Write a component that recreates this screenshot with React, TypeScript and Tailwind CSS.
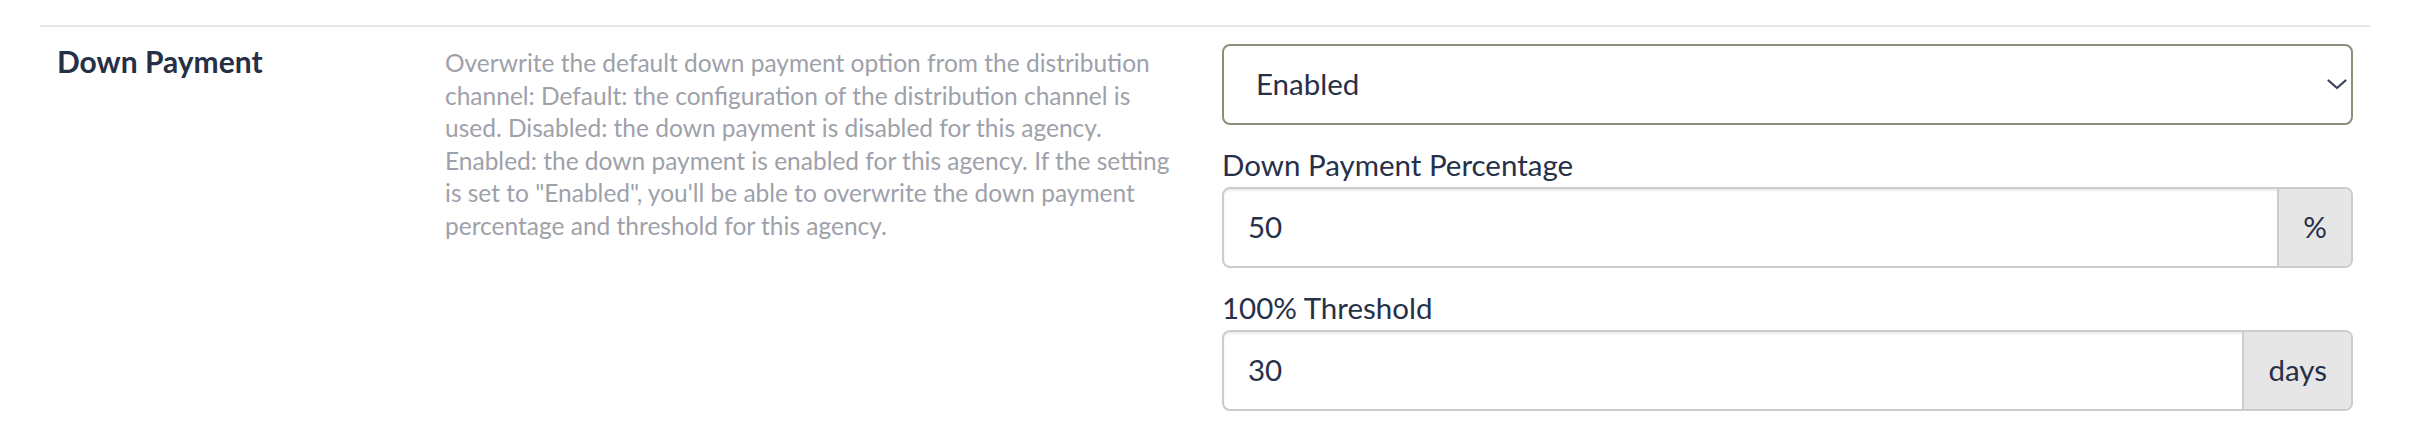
import React from 'react';

const ChevronDown: React.FC = () => (
  <svg width="20" height="11" viewBox="0 0 20 11" fill="none" className="text-[#39425a]">
    <path d="M1.5 1.5 L10 9 L18.5 1.5" stroke="currentColor" strokeWidth="2.2" strokeLinecap="round" strokeLinejoin="round" />
  </svg>
);

interface AddonInputProps {
  label: string;
  value: string;
  unit: string;
}

const AddonInput: React.FC<AddonInputProps> = ({ label, value, unit }) => (
  <div className="mt-[23px]">
    <label className="block text-[29.5px] leading-[34px] text-[#263048] mb-[5px]">{label}</label>
    <div className="flex h-[81px] rounded-[8px] border-2 border-[#cccccc] shadow-[inset_0_2px_2px_rgba(0,0,0,0.075)] overflow-hidden">
      <input
        type="text"
        defaultValue={value}
        className="flex-1 min-w-0 bg-transparent px-[24px] text-[29.5px] text-[#263048] outline-none"
      />
      <span className="flex items-center border-l-2 border-[#cccccc] bg-[#e6e6e6] px-[24px] text-[29.5px] text-[#263048]">
        {unit}
      </span>
    </div>
  </div>
);

export default function App() {
  return (
    <div className="min-h-[448px] bg-white pt-[25px] pl-[40px] pr-[42px] font-['Lato','Open_Sans',sans-serif]">
      <div className="flex border-t-2 border-[#e6e6e6] pt-[17px]">
        {/* Label */}
        <div className="w-[405px] shrink-0 pl-[17px]">
          <h3 className="text-[30px] leading-[36px] font-bold text-[#253046] -mt-[1px]">Down Payment</h3>
        </div>

        {/* Description */}
        <div className="w-[777px] shrink-0 pr-[32px]">
          <p className="mt-[3px] whitespace-nowrap text-[24.5px] leading-[32.5px] text-[#9ea1aa]">
            Overwrite the default down payment option from the distribution
            <br />
            channel: Default: the configuration of the distribution channel is
            <br />
            used. Disabled: the down payment is disabled for this agency.
            <br />
            Enabled: the down payment is enabled for this agency. If the setting
            <br />
            is set to "Enabled", you'll be able to overwrite the down payment
            <br />
            percentage and threshold for this agency.
          </p>
        </div>

        {/* Form */}
        <div className="flex-1 pr-[17px]">
          <div className="relative">
            <select
              defaultValue="enabled"
              className="block w-full h-[81px] appearance-none rounded-[8px] border-2 border-[#8f8d7b] bg-white pl-[32px] pr-[40px] text-[29.5px] text-[#263048] outline-none"
            >
              <option value="default">Default</option>
              <option value="disabled">Disabled</option>
              <option value="enabled">Enabled</option>
            </select>
            <span className="pointer-events-none absolute right-[6px] top-[35px]">
              <ChevronDown />
            </span>
          </div>

          <AddonInput label="Down Payment Percentage" value="50" unit="%" />
          <AddonInput label="100% Threshold" value="30" unit="days" />
        </div>
      </div>
    </div>
  );
}
